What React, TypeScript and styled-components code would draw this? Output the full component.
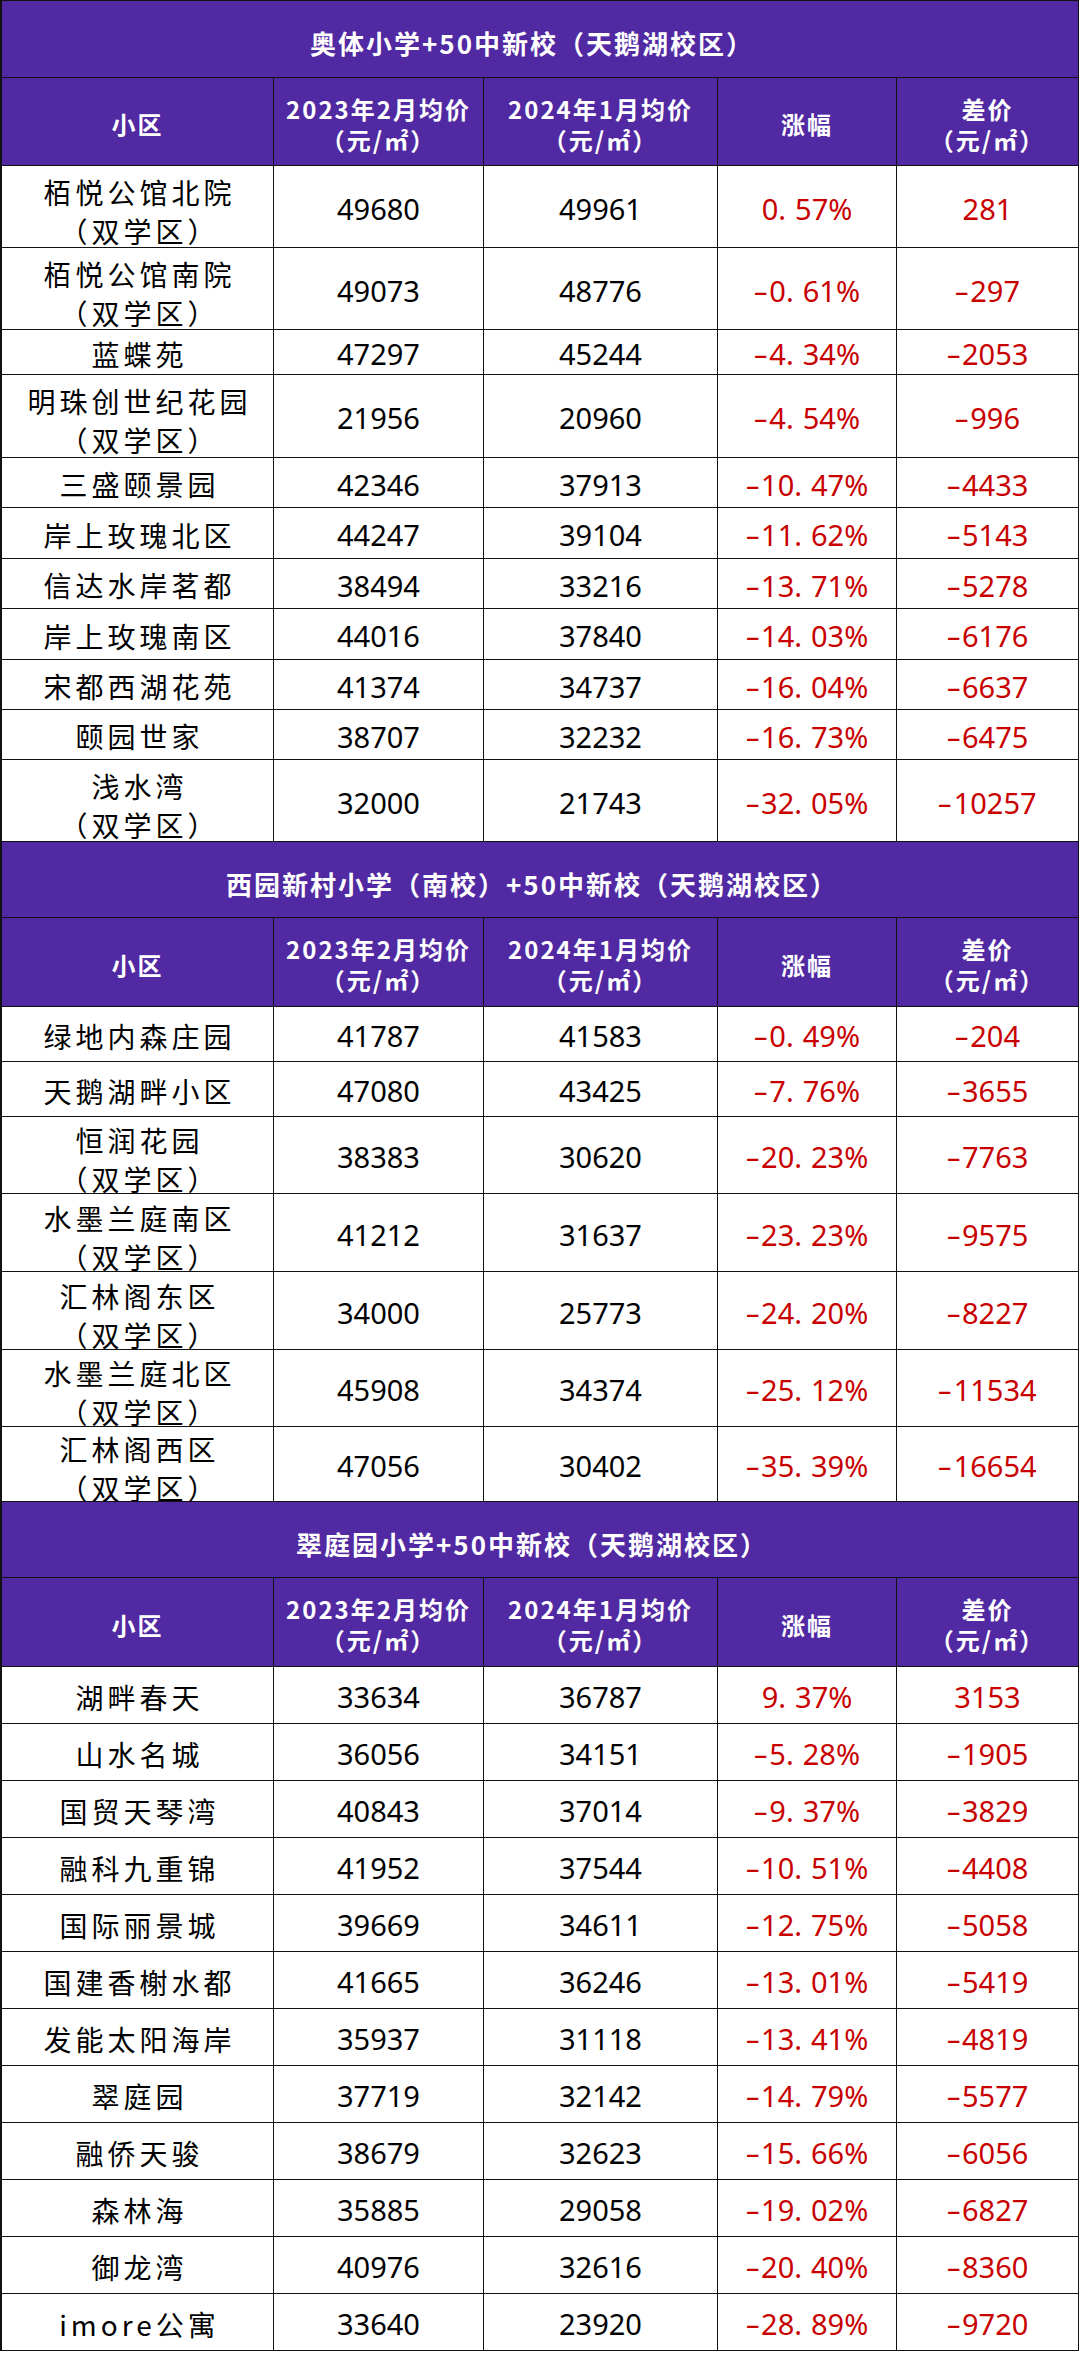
import React from "react";
import styled, { createGlobalStyle } from "styled-components";

const PURPLE = "#5129a2";
const RED = "#c80000";
const LINE = "#111";
const COLS = "272px 210px 234px 179px 181px";

type Row = {
  name: string;
  sub?: string;
  a: string;
  b: string;
  pct: string;
  diff: string;
  h: number;
};

type Section = {
  title: string;
  titleH: number;
  headH: number;
  rows: Row[];
};

const SECTIONS: Section[] = [
  {
    title: "奥体小学+50中新校（天鹅湖校区）",
    titleH: 77,
    headH: 88,
    rows: [
      { name: "栢悦公馆北院", sub: "（双学区）", a: "49680", b: "49961", pct: "0.57%", diff: "281", h: 82 },
      { name: "栢悦公馆南院", sub: "（双学区）", a: "49073", b: "48776", pct: "-0.61%", diff: "-297", h: 82 },
      { name: "蓝蝶苑", a: "47297", b: "45244", pct: "-4.34%", diff: "-2053", h: 45 },
      { name: "明珠创世纪花园", sub: "（双学区）", a: "21956", b: "20960", pct: "-4.54%", diff: "-996", h: 83 },
      { name: "三盛颐景园", a: "42346", b: "37913", pct: "-10.47%", diff: "-4433", h: 50 },
      { name: "岸上玫瑰北区", a: "44247", b: "39104", pct: "-11.62%", diff: "-5143", h: 51 },
      { name: "信达水岸茗都", a: "38494", b: "33216", pct: "-13.71%", diff: "-5278", h: 50 },
      { name: "岸上玫瑰南区", a: "44016", b: "37840", pct: "-14.03%", diff: "-6176", h: 51 },
      { name: "宋都西湖花苑", a: "41374", b: "34737", pct: "-16.04%", diff: "-6637", h: 50 },
      { name: "颐园世家", a: "38707", b: "32232", pct: "-16.73%", diff: "-6475", h: 50 },
      { name: "浅水湾", sub: "（双学区）", a: "32000", b: "21743", pct: "-32.05%", diff: "-10257", h: 82 },
    ],
  },
  {
    title: "西园新村小学（南校）+50中新校（天鹅湖校区）",
    titleH: 76,
    headH: 89,
    rows: [
      { name: "绿地内森庄园", a: "41787", b: "41583", pct: "-0.49%", diff: "-204", h: 55 },
      { name: "天鹅湖畔小区", a: "47080", b: "43425", pct: "-7.76%", diff: "-3655", h: 55 },
      { name: "恒润花园", sub: "（双学区）", a: "38383", b: "30620", pct: "-20.23%", diff: "-7763", h: 77 },
      { name: "水墨兰庭南区", sub: "（双学区）", a: "41212", b: "31637", pct: "-23.23%", diff: "-9575", h: 78 },
      { name: "汇林阁东区", sub: "（双学区）", a: "34000", b: "25773", pct: "-24.20%", diff: "-8227", h: 78 },
      { name: "水墨兰庭北区", sub: "（双学区）", a: "45908", b: "34374", pct: "-25.12%", diff: "-11534", h: 77 },
      { name: "汇林阁西区", sub: "（双学区）", a: "47056", b: "30402", pct: "-35.39%", diff: "-16654", h: 75 },
    ],
  },
  {
    title: "翠庭园小学+50中新校（天鹅湖校区）",
    titleH: 76,
    headH: 89,
    rows: [
      { name: "湖畔春天", a: "33634", b: "36787", pct: "9.37%", diff: "3153", h: 57 },
      { name: "山水名城", a: "36056", b: "34151", pct: "-5.28%", diff: "-1905", h: 57 },
      { name: "国贸天琴湾", a: "40843", b: "37014", pct: "-9.37%", diff: "-3829", h: 57 },
      { name: "融科九重锦", a: "41952", b: "37544", pct: "-10.51%", diff: "-4408", h: 57 },
      { name: "国际丽景城", a: "39669", b: "34611", pct: "-12.75%", diff: "-5058", h: 57 },
      { name: "国建香榭水都", a: "41665", b: "36246", pct: "-13.01%", diff: "-5419", h: 57 },
      { name: "发能太阳海岸", a: "35937", b: "31118", pct: "-13.41%", diff: "-4819", h: 57 },
      { name: "翠庭园", a: "37719", b: "32142", pct: "-14.79%", diff: "-5577", h: 57 },
      { name: "融侨天骏", a: "38679", b: "32623", pct: "-15.66%", diff: "-6056", h: 57 },
      { name: "森林海", a: "35885", b: "29058", pct: "-19.02%", diff: "-6827", h: 57 },
      { name: "御龙湾", a: "40976", b: "32616", pct: "-20.40%", diff: "-8360", h: 57 },
      { name: "imore公寓", a: "33640", b: "23920", pct: "-28.89%", diff: "-9720", h: 57 },
    ],
  },
];

const GlobalStyle = createGlobalStyle`
  html, body {
    margin: 0;
    padding: 0;
    background: #ffffff;
  }
  body {
    font-family: "Noto Sans CJK SC", "Noto Sans", sans-serif;
  }
  * {
    box-sizing: border-box;
  }
`;

const Table = styled.div`
  width: 1079px;
  display: flex;
  flex-direction: column;
  border-left: 2px solid ${LINE};
  border-right: 1px solid ${LINE};
  border-bottom: 1px solid ${LINE};
`;

const TitleRow = styled.div<{ $h: number }>`
  height: ${(p) => p.$h}px;
  display: flex;
  align-items: center;
  justify-content: center;
  padding: 7px 16px 0 0;
  background: ${PURPLE};
  border-top: 1px solid ${LINE};
  color: #ffffff;
  font-family: "Noto Sans CJK SC", sans-serif;
  font-size: 26px;
  font-weight: 700;
  letter-spacing: 2px;
`;

const HeadRow = styled.div<{ $h: number }>`
  height: ${(p) => p.$h}px;
  display: grid;
  grid-template-columns: ${COLS};
  background: ${PURPLE};
  border-top: 1px solid ${LINE};
`;

const HeadCell = styled.div`
  display: flex;
  flex-direction: column;
  align-items: center;
  justify-content: center;
  padding-top: 4px;
  border-right: 1px solid ${LINE};
  color: #ffffff;
  font-family: "Noto Sans CJK SC", sans-serif;
  font-size: 24px;
  font-weight: 700;
  line-height: 31px;
  letter-spacing: 2px;
  &:last-child {
    border-right: none;
  }
`;

const DataRow = styled.div<{ $h: number }>`
  height: ${(p) => p.$h}px;
  display: grid;
  grid-template-columns: ${COLS};
  border-top: 1px solid ${LINE};
  background: #ffffff;
`;

const Cell = styled.div<{ $tone?: "ink" | "red" }>`
  display: flex;
  align-items: center;
  justify-content: center;
  overflow: hidden;
  padding-top: 4px;
  border-right: 1px solid ${LINE};
  color: ${(p) => (p.$tone === "red" ? RED : "#000000")};
  font-family: "Noto Sans", "Noto Sans CJK SC", sans-serif;
  font-size: 29px;
  line-height: 36px;
  white-space: nowrap;
  &:last-child {
    border-right: none;
  }
`;

const NameCell = styled(Cell)<{ $two: boolean }>`
  flex-direction: column;
  padding-top: ${(p) => (p.$two ? 10 : 4)}px;
  padding-left: 4px;
  font-family: "Noto Sans CJK SC", sans-serif;
  font-size: 28px;
  line-height: 39px;
  letter-spacing: 4px;
`;

const Line = styled.span`
  display: block;
`;

const Dot = styled.span`
  margin-right: 9px;
`;

const Sign = styled.span`
  display: inline-block;
  transform: scaleX(1.6);
  margin: 0 4px 0 2px;
`;

function Signed({ v }: { v: string }) {
  if (!v.startsWith("-")) return <>{v}</>;
  return (
    <>
      <Sign>-</Sign>
      {v.slice(1)}
    </>
  );
}

function Pct({ v }: { v: string }) {
  const neg = v.startsWith("-");
  const body = neg ? v.slice(1) : v;
  const [a, b] = body.split(".");
  return (
    <>
      {neg && <Sign>-</Sign>}
      {a}
      <Dot>.</Dot>
      {b}
    </>
  );
}

function SectionBlock({ s }: { s: Section }) {
  return (
    <>
      <TitleRow $h={s.titleH}>{s.title}</TitleRow>
      <HeadRow $h={s.headH}>
        <HeadCell>小区</HeadCell>
        <HeadCell>
          <Line>2023年2月均价</Line>
          <Line>（元/㎡）</Line>
        </HeadCell>
        <HeadCell>
          <Line>2024年1月均价</Line>
          <Line>（元/㎡）</Line>
        </HeadCell>
        <HeadCell>涨幅</HeadCell>
        <HeadCell>
          <Line>差价</Line>
          <Line>（元/㎡）</Line>
        </HeadCell>
      </HeadRow>
      {s.rows.map((r) => (
        <DataRow key={r.name} $h={r.h}>
          <NameCell $two={!!r.sub}>
            <Line>{r.name}</Line>
            {r.sub && <Line>{r.sub}</Line>}
          </NameCell>
          <Cell>{r.a}</Cell>
          <Cell>{r.b}</Cell>
          <Cell $tone="red">
            <Pct v={r.pct} />
          </Cell>
          <Cell $tone="red">
            <Signed v={r.diff} />
          </Cell>
        </DataRow>
      ))}
    </>
  );
}

export default function App() {
  return (
    <>
      <GlobalStyle />
      <Table>
        {SECTIONS.map((s) => (
          <SectionBlock key={s.title} s={s} />
        ))}
      </Table>
    </>
  );
}
